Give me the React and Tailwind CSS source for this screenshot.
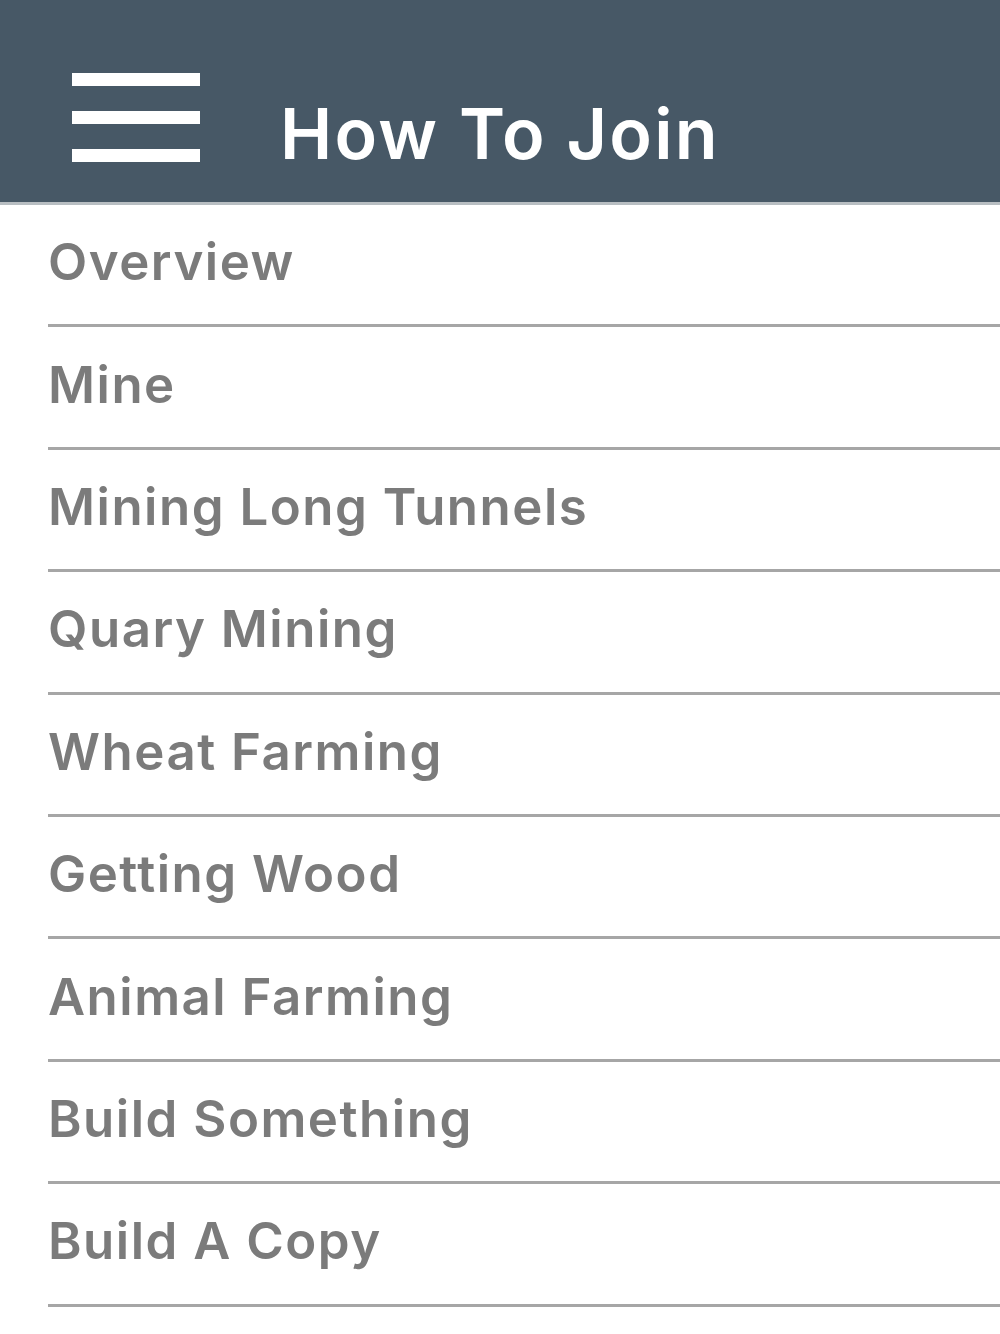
const items = [
  'Overview',
  'Mine',
  'Mining Long Tunnels',
  'Quary Mining',
  'Wheat Farming',
  'Getting Wood',
  'Animal Farming',
  'Build Something',
  'Build A Copy',
];

export default function App() {
  return (
    <div className="w-[1000px] h-[1334px] bg-white overflow-hidden" style={{ fontFamily: 'Inter, "Liberation Sans", sans-serif' }}>
      {/* Header */}
      <div className="h-[205px] bg-[#475866] border-b-[3px] border-[#b8bec2] flex items-start">
        <button className="ml-[72px] mt-[73px] w-[128px] flex flex-col gap-[25px]">
          <span className="block h-[13px] bg-white"></span>
          <span className="block h-[13px] bg-white"></span>
          <span className="block h-[13px] bg-white"></span>
        </button>
        <h1 className="ml-[80px] mt-[99px] text-[70px] font-semibold tracking-[2.2px] text-white leading-none">How To Join</h1>
      </div>

      {/* Menu list */}
      <ul>
        {items.map((item) => (
          <li key={item} className="ml-[48px] h-[122.4px] border-b-[3px] border-[#a6a6a6] flex items-center">
            <span className="text-[51px] font-semibold tracking-[1.5px] text-[#7b7b7b] leading-none mt-[-6px]">{item}</span>
          </li>
        ))}
      </ul>
    </div>
  );
}
